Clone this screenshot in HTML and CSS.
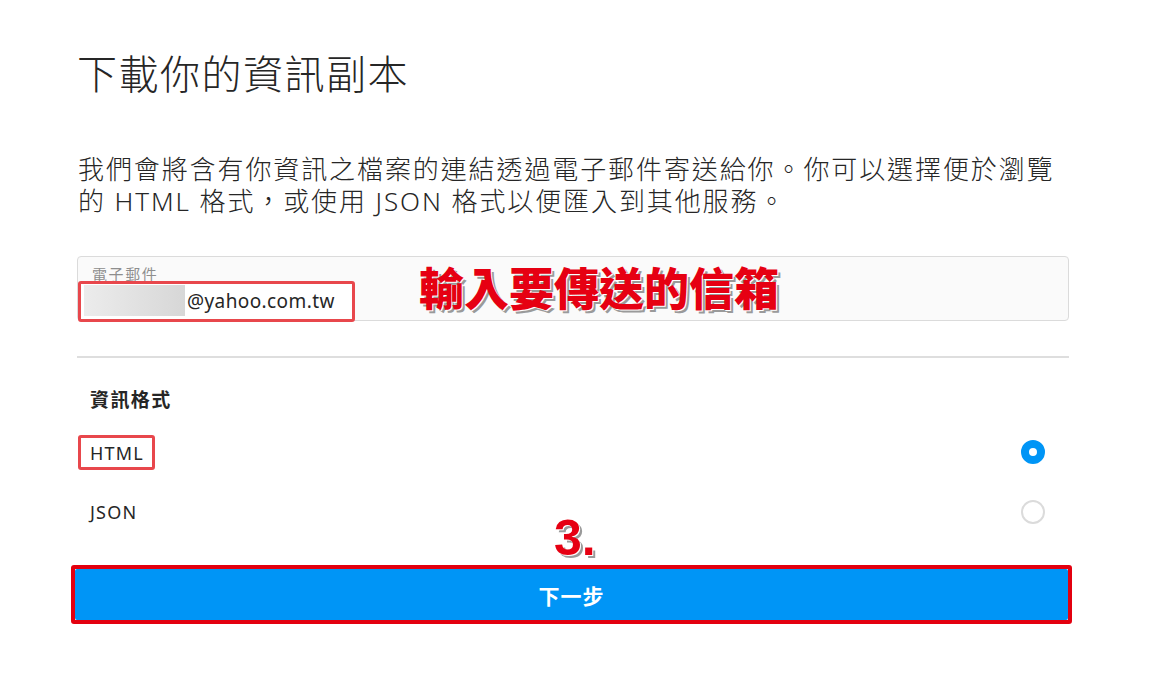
FILE: index.html
```html
<!DOCTYPE html>
<html lang="zh-Hant">
<head>
<meta charset="utf-8">
<title>下載你的資訊副本</title>
<link rel="stylesheet" href="styles.css">
</head>
<body>
<main class="page">
  <h1 class="title">下載你的資訊副本</h1>
  <p class="intro">我們會將含有你資訊之檔案的連結透過電子郵件寄送給你。你可以選擇便於瀏覽的 HTML 格式，或使用 JSON 格式以便匯入到其他服務。</p>

  <div class="field">
    <div class="field-label">電子郵件</div>
    <div class="field-value mark">
      <span class="redact"></span><span class="email">@yahoo.com.tw</span>
    </div>
  </div>

  <hr class="divider">

  <section class="format">
    <h2 class="format-title">資訊格式</h2>
    <div class="option">
      <span class="option-name mark">HTML</span>
      <span class="radio radio-on"></span>
    </div>
    <div class="option">
      <span class="option-name">JSON</span>
      <span class="radio"></span>
    </div>
  </section>

  <div class="btn-frame">
    <button class="btn-next" type="button">下一步</button>
  </div>

  <div class="note note-email">輸入要傳送的信箱</div>
  <div class="note note-step">3.</div>
</main>
</body>
</html>
```

FILE: styles.css
```css
html, body {
  margin: 0;
  padding: 0;
  background: #ffffff;
}

body {
  font-family: "Segoe UI", "Noto Sans", "Noto Sans CJK TC", sans-serif;
  color: #262626;
}

.page {
  position: relative;
  width: 992px;
  margin-left: 77px;
  padding-top: 48px;
}

.title {
  margin: 0;
  font-family: "Noto Sans CJK TC", sans-serif;
  font-size: 40px;
  font-weight: 300;
  line-height: 48px;
  letter-spacing: 1.5px;
  color: #262626;
}

.intro {
  margin: 57px 0 0 1px;
  font-family: "Noto Sans", "Noto Sans CJK TC", sans-serif;
  font-size: 26px;
  font-weight: 300;
  line-height: 32px;
  letter-spacing: 1.9px;
  color: #262626;
}

.field {
  box-sizing: border-box;
  margin-top: 39px;
  height: 65px;
  background: #fafafa;
  border: 1px solid #dbdbdb;
  border-radius: 4px;
  padding-top: 8px;
}

.field-label {
  padding-left: 14px;
  font-family: "Noto Sans CJK TC", sans-serif;
  font-size: 15px;
  line-height: 17px;
  letter-spacing: 1.6px;
  color: #8e8e8e;
}

.field-value {
  display: inline-flex;
  align-items: center;
  margin-top: -1px;
  padding: 1px 17px 3px 3px;
  background: #ffffff;
  position: relative;
}

.mark {
  border: 3px solid #e8474c;
  border-radius: 3px;
}

.redact {
  display: block;
  width: 101px;
  height: 31px;
  background: linear-gradient(to right, #ececec, #d7d7d7);
}

.email {
  margin-left: 2px;
  font-size: 19px;
  line-height: 24px;
  letter-spacing: 0.4px;
  color: #262626;
}

.divider {
  margin: 35px 0 0;
  border: 0;
  height: 2px;
  background: #dedede;
}

.format {
  padding-top: 28px;
}

.format-title {
  margin: 0;
  padding-left: 13px;
  font-family: "Noto Sans CJK TC", sans-serif;
  font-size: 19px;
  font-weight: 700;
  line-height: 26px;
  letter-spacing: 1.4px;
  color: #262626;
}

.option {
  display: flex;
  align-items: center;
  justify-content: space-between;
  height: 60px;
  padding: 0 24px 0 13px;
}

.option:first-of-type {
  margin-top: 10px;
}

.option-name {
  font-size: 18px;
  line-height: 24px;
  letter-spacing: 1.2px;
  color: #262626;
}

.option-name.mark {
  margin-left: -12px;
  padding: 3px 8px 2px 9px;
}

.radio {
  box-sizing: border-box;
  width: 24px;
  height: 24px;
  border-radius: 50%;
  border: 2px solid #dbdbdb;
}

.radio-on {
  border: 8px solid #0095f6;
  background: #ffffff;
}

.btn-frame {
  margin: 23px 0 0 -6px;
  width: 993px;
  border: 4px solid #e3000f;
  border-radius: 3px;
}

.btn-next {
  display: block;
  width: 100%;
  height: 51px;
  border: 0;
  border-radius: 2px;
  background: #0095f6;
  color: #ffffff;
  font-family: "Noto Sans CJK TC", sans-serif;
  font-size: 21px;
  font-weight: 700;
  letter-spacing: 1px;
  cursor: pointer;
}

.note {
  position: absolute;
  font-family: "Noto Sans CJK TC", sans-serif;
  font-weight: 900;
  color: #e60012;
  text-shadow: 1px 1px 0 #ffffff, 3px 3px 0 #9a9a9a;
  white-space: nowrap;
}

.note-email {
  left: 342px;
  top: 257px;
  font-size: 45px;
  line-height: 60px;
}

.note-step {
  left: 477px;
  top: 508px;
  font-family: "Liberation Sans", sans-serif;
  font-weight: 700;
  font-size: 50px;
  line-height: 60px;
}
```
